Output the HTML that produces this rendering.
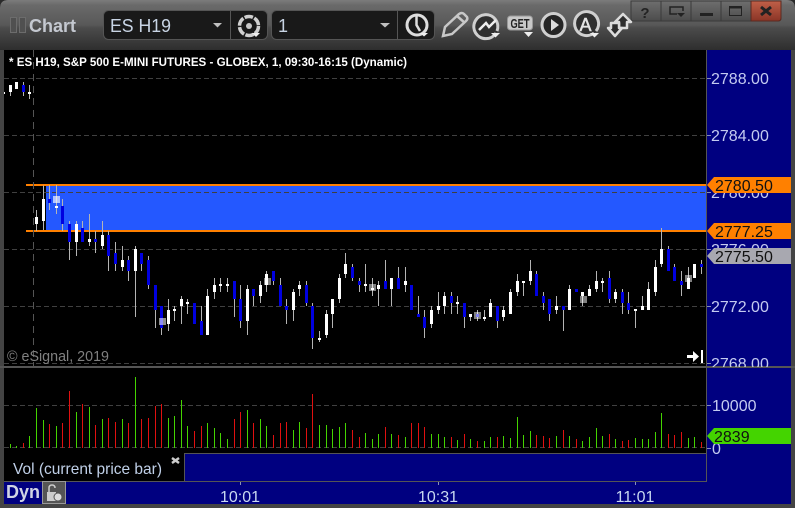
<!DOCTYPE html>
<html>
<head>
<meta charset="utf-8">
<style>
html,body{margin:0;padding:0;background:#2a2a2a;}
body{width:795px;height:508px;overflow:hidden;font-family:"Liberation Sans",sans-serif;}
svg{display:block;}
text{font-family:"Liberation Sans",sans-serif;}
</style>
</head>
<body>
<svg width="795" height="508" viewBox="0 0 795 508" xmlns="http://www.w3.org/2000/svg">
<defs>
<linearGradient id="tb" x1="0" y1="0" x2="0" y2="1">
<stop offset="0" stop-color="#7c7c7c"/><stop offset=".1" stop-color="#6a6a6a"/><stop offset=".5" stop-color="#585858"/><stop offset=".55" stop-color="#4c4c4c"/><stop offset="1" stop-color="#2e2e2e"/>
</linearGradient>
<linearGradient id="wb" x1="0" y1="0" x2="0" y2="1">
<stop offset="0" stop-color="#6e6e6e"/><stop offset="1" stop-color="#4c4c4c"/>
</linearGradient>
<linearGradient id="xb" x1="0" y1="0" x2="0" y2="1">
<stop offset="0" stop-color="#c06048"/><stop offset="1" stop-color="#8a3426"/>
</linearGradient>
<clipPath id="pricec"><rect x="707" y="50" width="84" height="317"/></clipPath>
<clipPath id="volc"><rect x="707" y="368" width="84" height="86"/></clipPath>
</defs>

<!-- window -->
<rect width="795" height="508" fill="#444"/>
<path d="M0 50V8Q0 0 8 0H787Q795 0 795 8V50Z" fill="url(#tb)"/>
<path d="M0 0H8Q0 0 0 8Z M795 0H787Q795 0 795 8Z" fill="#2a2a2a"/>

<!-- title -->
<rect x="10.500" y="17.500" width="6" height="15" fill="#505050" stroke="#6c6c6c"/>
<rect x="19.500" y="17.500" width="6" height="15" fill="#505050" stroke="#6c6c6c"/>
<text x="29" y="32" font-size="18" font-weight="bold" fill="#c4c8d0">Chart</text>

<!-- dropdowns -->
<rect x="103.500" y="10.500" width="164" height="29" rx="5" fill="#191919" stroke="#555"/>
<line x1="230.500" y1="11" x2="230.500" y2="39" stroke="#555"/>
<text x="110" y="32" font-size="18" fill="#c8d4e4" textLength="61" lengthAdjust="spacingAndGlyphs">ES H19</text>
<path d="M213 23h9l-4.500 4.500z" fill="#c0c0c0"/>
<circle cx="249" cy="26" r="9.500" fill="none" stroke="#d0d0d0" stroke-width="3.500" stroke-dasharray="8.500 1.500"/>
<circle cx="249" cy="26" r="3" fill="#c8c8c8"/>
<path d="M252 33h8l-4 4z" fill="#eee"/>

<rect x="271.500" y="10.500" width="163" height="29" rx="5" fill="#191919" stroke="#555"/>
<line x1="397.500" y1="11" x2="397.500" y2="39" stroke="#555"/>
<text x="278" y="32" font-size="18" fill="#c8d4e4">1</text>
<path d="M380 23h10l-5 4.500z" fill="#c0c0c0"/>
<circle cx="417" cy="25" r="10" fill="none" stroke="#ddd" stroke-width="3"/>
<path d="M416.500 15V25L420 31" fill="none" stroke="#ddd" stroke-width="2.500"/>
<path d="M420 33h8l-4 3.500z" fill="#eee"/>

<!-- pencil -->
<path d="M443 36L445 27L459 14Q462 12 464 14L467 17Q468 19 466 21L452 34Z" fill="none" stroke="#c8c8c8" stroke-width="2.500"/>
<path d="M457 16L465 23" stroke="#c8c8c8" stroke-width="2.500"/>
<!-- chart circle -->
<path d="M496 33A12 12 0 1 1 497 31" fill="#303030" stroke="#d0d0d0" stroke-width="3"/>
<path d="M479 30L486 23L489 27L496 20" fill="none" stroke="#eee" stroke-width="2.500"/>
<path d="M491 33h9l-4.500 4.500z" fill="#eee"/>
<!-- GET -->
<rect x="507.500" y="16" width="25" height="14" rx="3" fill="#c8c8c8" stroke="#999"/>
<text x="510.500" y="28" font-size="13" font-weight="bold" fill="#222" textLength="19" lengthAdjust="spacingAndGlyphs">GET</text>
<path d="M524 32h9l-4.500 5z" fill="#eee"/>
<!-- play -->
<circle cx="553.500" cy="25" r="11.500" fill="#262626" stroke="#d0d0d0" stroke-width="3"/>
<path d="M551 19L559 25L551 31Z" fill="#ddd"/>
<!-- A -->
<path d="M594 33A12 12 0 1 1 596 31" fill="#303030" stroke="#d0d0d0" stroke-width="3"/>
<text x="585.500" y="31" font-size="18" fill="#e4e4e4" stroke="#e4e4e4" stroke-width=".5" text-anchor="middle">A</text>
<path d="M590 33h9l-4.500 4.500z" fill="#eee"/>
<!-- arrows -->
<path d="M623 14L631 22H627V28H619V22H615Z" fill="#2e2e2e" stroke="#dcdcdc" stroke-width="2.500" stroke-linejoin="round"/>
<path d="M615 36L608 28H611V23H619V28H622Z" fill="#2e2e2e" stroke="#dcdcdc" stroke-width="2.500" stroke-linejoin="round"/>

<!-- window buttons -->
<path d="M631 1H781V18Q781 21 778 21H634Q631 21 631 18Z" fill="url(#wb)" stroke="#3a3a3a"/>
<path d="M751 1H781V18Q781 21 778 21H751Z" fill="url(#xb)" stroke="#5a2a20"/>
<path d="M661 1V21M691 1V21M721 1V21" stroke="#3a3a3a"/>
<text x="645" y="18" font-size="15" font-weight="bold" fill="#222" text-anchor="middle">?</text>
<path d="M677 14H670V7H683V11" fill="none" stroke="#222" stroke-width="1.500"/>
<path d="M677 13h8l-4 4z" fill="#222"/>
<rect x="700" y="13" width="13" height="3" fill="#222"/>
<rect x="729.500" y="6.500" width="12" height="9" fill="none" stroke="#222"/><rect x="729" y="6" width="13" height="2.500" fill="#222"/>
<path d="M761 7L771 15M771 7L761 15" stroke="#222" stroke-width="3"/>

<!-- chart panes -->
<rect x="4" y="50" width="702" height="316" fill="#000"/>
<rect x="4" y="368" width="702" height="86" fill="#000"/>
<rect x="707" y="50" width="84" height="454" fill="#000080"/>
<rect x="4" y="482" width="703" height="22" fill="#000080"/>
<rect x="4" y="454" width="180" height="28" fill="#000"/>
<rect x="185" y="454" width="521" height="27" fill="#000080"/>
<rect x="0" y="366" width="795" height="2" fill="#555"/>
<rect x="706" y="50" width="1" height="432" fill="#555"/>
<rect x="184" y="453" width="523" height="1" fill="#555"/>
<rect x="4" y="481" width="703" height="1" fill="#555"/>
<rect x="184" y="453" width="1" height="28" fill="#555"/>
<rect x="4" y="453" width="180" height="1" fill="#000"/>

<!-- zone -->
<rect x="46" y="186" width="660" height="44" fill="#2458ff"/>
<rect x="26" y="184" width="680" height="2" fill="#ff8000"/>
<rect x="26" y="230" width="680" height="2" fill="#ff8000"/>

<!-- grid -->
<g stroke="#404040" stroke-dasharray="5 3" fill="none">
<path d="M4 78.500H706M4 135.500H706M4 192.500H706M4 249.500H706M4 306.500H706M4 363.500H706M4 405.500H706M4 447.500H706"/>
<path d="M33.500 50V366" stroke="#555" stroke-dasharray="7 5"/>
</g>

<g shape-rendering="crispEdges" fill="none">
<!-- top candles -->
<g transform="matrix(.33333333 0 0 .33333333 0 0)">
<path stroke="#b4b4b4" stroke-width="3" d="M31.500 255V288M49.500 246V267M70.500 246V288M88.500 255V297"/>
<path stroke="#fff" stroke-width="9" d="M31.500 255V276M49.500 246V267M88.500 276V282"/>
<path stroke="#0000e0" stroke-width="9" d="M70.500 255V276"/>
<rect x="12" y="276" width="3" height="6" fill="#fff"/>
</g>
<!-- group 1 -->
<g transform="matrix(.33333333 0 0 .33333333 0 170)">
<path stroke="#b4b4b4" stroke-width="3" d="M109.500 120V183M130.500 47V180M148.500 45V120M169.500 45V132M187.500 87V183M208.500 153V270M229.500 153V258M247.500 153V216M268.500 132V228M286.500 183V249M307.500 153V237M325.500 183V303M346.500 216V303M367.500 228V303M385.500 258V333M406.500 228V441M424.500 249V303M445.500 258V357M466.500 345V474M484.500 408V495M505.500 387V483M523.500 408V453M544.500 378V462M562.500 387V432M604.500 408V495M622.500 357V495M643.500 324V387M661.500 324V366M682.500 324V366M703.500 333V441"/>
<path stroke="#fff" stroke-width="9" d="M109.500 141V162M130.500 87V153M169.500 108V114M229.500 162V216M268.500 207V216M307.500 195V228M367.500 270V291M406.500 237V303M505.500 420V462M523.500 417V423M544.500 387V408M562.500 396V402M622.500 378V495M643.500 345V366M661.500 342V348M682.500 342V348"/>
<path stroke="#0000e0" stroke-width="9" d="M148.500 87V99M187.500 108V162M208.500 162V216M247.500 174V216M286.500 207V216M325.500 195V258M346.500 249V282M385.500 270V303M424.500 249V282M445.500 270V345M466.500 345V420M484.500 408V474M583.500 399V462M604.500 453V495M703.500 333V387"/>
<rect x="159" y="78" width="21" height="21" fill="#fff" fill-opacity=".65"/>
<rect x="477" y="444" width="21" height="21" fill="#fff" fill-opacity=".55"/>
</g>
<!-- group 2 -->
<g transform="matrix(.33333333 0 0 .33333333 240 230)">
<path stroke="#b4b4b4" stroke-width="3" d="M1.500 165V294M22.500 165V315M40.500 177V228M61.500 153V219M79.500 123V186M100.500 123V165M121.500 144V228M139.500 207V282M160.500 177V273M178.500 153V198M199.500 153V228M217.500 219V357M238.500 303V336M259.500 240V324M277.500 207V294M298.500 132V219M316.500 69V144M337.500 102V153M358.500 144V186M376.500 102V186M397.500 144V198M415.500 153V228M436.500 90V177M454.500 144V228M475.500 111V177M496.500 111V186M514.500 165V240M535.500 198V261M553.500 240V324M574.500 228V294M595.500 186V252M613.500 186V252M634.500 186V252M652.500 198V252M673.500 219V294M691.500 252V273M712.500 240V273"/>
<path stroke="#fff" stroke-width="9" d="M22.500 177V273M61.500 165V198M79.500 132V165M160.500 186V240M178.500 165V177M238.500 324V330M259.500 252V315M277.500 207V252M298.500 144V207M316.500 102V132M376.500 162V168M397.500 174V180M415.500 165V177M454.500 144V177M496.500 153V165M574.500 240V282M595.500 228V240M613.500 198V228M652.500 216V222M691.500 252V261"/>
<path stroke="#0000e0" stroke-width="9" d="M1.500 207V273M40.500 177V198M100.500 123V153M121.500 165V228M139.500 228V240M199.500 165V219M217.500 228V324M337.500 111V144M358.500 153V165M436.500 153V177M475.500 144V177M514.500 165V240M535.500 252V261M553.500 261V294M634.500 198V219M673.500 219V261M712.500 252V261"/>
<rect x="72" y="144" width="21" height="21" fill="#fff" fill-opacity=".5"/>
<rect x="387" y="162" width="21" height="21" fill="#fff" fill-opacity=".5"/>
<rect x="702" y="246" width="21" height="21" fill="#fff" fill-opacity=".5"/>
</g>
<!-- group 3 -->
<g transform="matrix(.33333333 0 0 .33333333 480 170)">
<path stroke="#b4b4b4" stroke-width="3" d="M13.500 420V453M31.500 387V441M52.500 408V474M70.500 408V453M91.500 357V432M112.500 312V378M130.500 333V378M151.500 270V345M169.500 303V378M190.500 366V420M208.500 387V453M229.500 378V432M250.500 408V483M268.500 345V420M289.500 357V366M307.500 366V408M328.500 345V378M349.500 303V366M367.500 324V366M388.500 303V399M406.500 357V399M427.500 357V432M445.500 366V432M466.500 417V474M487.500 378V420M505.500 336V420M526.500 270V378M544.500 174V291M565.500 228V303M583.500 282V333M604.500 303V378M625.500 291V357M643.500 282V324M664.500 270V312"/>
<path stroke="#fff" stroke-width="9" d="M13.500 441V447M31.500 399V441M70.500 420V441M91.500 366V432M112.500 333V366M130.500 333V339M151.500 303V333M229.500 408V420M268.500 357V420M307.500 366V378M328.500 357V378M349.500 333V357M367.500 333V339M406.500 366V387M466.500 417V423M487.500 408V420M505.500 357V420M526.500 291V366M544.500 237V282M625.500 324V357M643.500 282V324"/>
<path stroke="#0000e0" stroke-width="9" d="M52.500 408V453M169.500 312V378M190.500 378V399M208.500 387V432M250.500 408V420M289.500 357V366M388.500 324V387M427.500 366V399M445.500 399V420M565.500 237V303M583.500 291V333M604.500 333V345M664.500 282V291"/>
<rect x="300" y="378" width="21" height="21" fill="#fff" fill-opacity=".5"/>
<rect x="615" y="315" width="21" height="21" fill="#fff" fill-opacity=".5"/>
</g>

<!-- volume -->
<g transform="matrix(.33333333 0 0 .33333333 0 360)" stroke-width="3">
<path stroke="#44d400" d="M31.500 252V264M49.500 258V264M88.500 228V264M109.500 144V264M130.500 180V264M169.500 198V264M229.500 156V264M268.500 141V264M307.500 177V264M367.500 177V264M406.500 51V264M505.500 174V264M523.500 168V264M544.500 120V264M562.500 198V264M622.500 189V264M643.500 204V264M661.500 219V264M682.500 237V264M742.500 150V264M781.500 177V264"/>
<path stroke="#e01010" d="M70.500 249V264M148.500 192V264M187.500 189V264M208.500 93V264M247.500 132V264M286.500 195V264M325.500 174V264M346.500 186V264M385.500 189V264M424.500 177V264M445.500 174V264M466.500 138V264M484.500 132V264M583.500 213V264M604.500 198V264M703.500 177V264M721.500 156V264M760.500 189V264"/>
</g>
<g transform="matrix(.33333333 0 0 .33333333 265 360)" stroke-width="3">
<path stroke="#44d400" d="M4.500 198V264M85.500 210V264M103.500 186V264M163.500 195V264M184.500 195V264M202.500 207V264M223.500 201V264M241.500 189V264M301.500 219V264M322.500 237V264M340.500 222V264M379.500 222V264M421.500 231V264M499.500 222V264M520.500 222V264M538.500 231V264M577.500 240V264M616.500 237V264M658.500 243V264M676.500 231V264M715.500 228V264M736.500 234V264M757.500 171V264M775.500 225V264"/>
<path stroke="#e01010" d="M25.500 225V264M46.500 189V264M64.500 186V264M124.500 204V264M142.500 102V264M262.500 210V264M283.500 231V264M361.500 201V264M400.500 225V264M439.500 189V264M460.500 189V264M478.500 201V264M559.500 231V264M598.500 222V264M637.500 243V264M697.500 231V264"/>
</g>
<g transform="matrix(.33333333 0 0 .33333333 530 360)" stroke-width="3">
<path stroke="#44d400" d="M1.500 213V264M79.500 228V264M118.500 228V264M157.500 243V264M178.500 231V264M199.500 204V264M217.500 228V264M256.500 237V264M316.500 234V264M337.500 237V264M355.500 237V264M376.500 216V264M394.500 159V264M475.500 234V264M493.500 231V264"/>
<path stroke="#e01010" d="M19.500 225V264M40.500 228V264M58.500 234V264M100.500 210V264M139.500 237V264M238.500 222V264M277.500 243V264M295.500 240V264M415.500 222V264M433.500 225V264M454.500 216V264M514.500 246V264"/>
</g>
</g>

<!-- header text -->
<text x="9" y="66" font-size="11.500" font-weight="bold" fill="#fff" textLength="398" lengthAdjust="spacingAndGlyphs">* ES H19, S&amp;P 500 E-MINI FUTURES - GLOBEX, 1, 09:30-16:15 (Dynamic)</text>
<text x="7" y="361" font-size="14.500" fill="#808080" textLength="102" lengthAdjust="spacingAndGlyphs">© eSignal, 2019</text>

<!-- jump icon -->
<path d="M687 355H693V351L699 356.500L693 362V358H687Z" fill="#fff"/>
<rect x="701" y="350" width="2" height="13" fill="#fff"/>

<!-- axis -->
<g stroke="#8890b8"><path d="M707 78.500H711M707 135.500H711M707 192.500H711M707 249.500H711M707 306.500H711M707 363.500H711M707 405.500H711M707 448.500H711"/></g>
<g font-size="16" fill="#c4cbf0">
<g clip-path="url(#pricec)">
<text x="711" y="84">2788.00</text>
<text x="711" y="141">2784.00</text>
<text x="711" y="198">2780.00</text>
<text x="711" y="255">2776.00</text>
<text x="711" y="312">2772.00</text>
<text x="711" y="369">2768.00</text>
</g>
<g clip-path="url(#volc)">
<text x="712" y="411">10000</text>
<text x="712" y="454">0</text>
</g>
</g>

<!-- labels -->
<path d="M707 185L714 177H791V193H714Z" fill="#ff8000"/>
<path d="M707 231L714 223H791V239H714Z" fill="#ff8000"/>
<path d="M707 256L714 248H791V264H714Z" fill="#a8a8b0"/>
<path d="M707 436L714 428H791V444H714Z" fill="#44d400"/>
<g font-size="16" fill="#111">
<text x="715" y="191">2780.50</text>
<text x="715" y="237">2777.25</text>
<text x="715" y="262">2775.50</text>
<text x="714" y="442">2839</text>
</g>

<!-- vol legend -->
<text x="13" y="474" font-size="16" fill="#c0d0e8" textLength="149" lengthAdjust="spacingAndGlyphs">Vol (current price bar)</text>
<path d="M172 458L179 463M179 458L172 463" stroke="#ccc" stroke-width="2.500" fill="none"/>

<!-- bottom axis -->
<text x="6" y="498" font-size="18" font-weight="bold" fill="#d0d4e4">Dyn</text>
<rect x="42.500" y="481.500" width="23" height="22" fill="#555" stroke="#999"/>
<path d="M47 492H56V501H47Z" fill="#ccc"/>
<path d="M49 492V488Q49 485 52 485Q55 485 55 488" fill="none" stroke="#ccc" stroke-width="1.500"/>
<circle cx="58" cy="497" r="4" fill="#ddd" stroke="#555"/>
<g stroke="#8890b8"><path d="M240.500 482V485M438.500 482V485M635.500 482V485"/></g>
<g font-size="16" fill="#c8d8f0" text-anchor="middle">
<text x="240" y="502">10:01</text>
<text x="438" y="502">10:31</text>
<text x="635" y="502">11:01</text>
</g>
</svg>
</body>
</html>
